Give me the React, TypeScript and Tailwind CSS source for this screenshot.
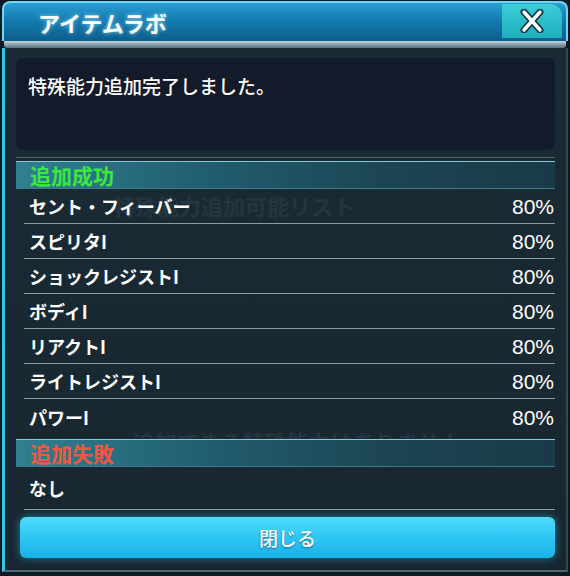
import React from "react";

const rows = [
  "セント・フィーバー",
  "スピリタI",
  "ショックレジストI",
  "ボディI",
  "リアクトI",
  "ライトレジストI",
  "パワーI",
];

export default function App() {
  return (
    <div className="w-[570px] h-[576px] bg-[#0c1a23] relative overflow-hidden flex flex-col font-['Noto_Sans_CJK_JP','Noto_Sans',sans-serif] text-white">
      {/* Title bar */}
      <div className="h-[40px] mx-[2px] mt-[1px] rounded-t-[8px] border-2 border-b-0 border-[#6fd6f4] bg-[linear-gradient(to_bottom,#2a9fd2,#137bb0_45%,#0d5e8c)] flex items-center justify-between relative">
        <div className="pl-[34px] text-[22px] font-bold leading-none [text-shadow:0_0_4px_rgba(160,230,255,0.8)]">
          アイテムラボ
        </div>
        <div className="mr-[4px] mt-[-3px] w-[60px] h-[34px] bg-[linear-gradient(to_bottom,#3ccfd8,#1fadbc)] rounded-tr-[12px] flex items-center justify-center">
          <svg width="28" height="24" viewBox="0 0 28 24">
            <path d="M6 3 L22 21 M22 3 L6 21" stroke="#0e3a45" strokeWidth="7" strokeLinecap="round" />
            <path d="M6 3 L22 21 M22 3 L6 21" stroke="#ffffff" strokeWidth="3.5" strokeLinecap="round" />
          </svg>
        </div>
      </div>
      {/* metallic band */}
      <div className="h-[7px] mx-[4px] bg-[linear-gradient(to_bottom,#c8d6dc,#8aa0aa_50%,#55707c)] rounded-b-[3px]" />

      {/* Body */}
      <div className="flex-1 mx-[2px] mb-[4px] border-l-[3px] border-r-[2px] border-b-[2px] border-l-[#3fc0e8] border-r-[#2f4a55] border-b-[#4a6a78] bg-[linear-gradient(to_bottom,#1a2b36,#18272f)] pl-[11px] pr-[11px] pt-[10px] flex flex-col relative">
        {/* ghost overlay texts */}
        <div className="absolute left-[108px] top-[146px] text-[22px] font-bold text-[#26363f] leading-none pointer-events-none">
          特殊能力追加可能リスト
        </div>
        <div className="absolute left-[128px] top-[382px] text-[22px] font-bold text-[#26363f] leading-none pointer-events-none">
          追加できる特殊能力はありません
        </div>

        {/* message box */}
        <div className="h-[92px] rounded-[7px] bg-[#131a29] px-[12px] pt-[18px] text-[19px] font-medium leading-none relative">
          特殊能力追加完了しました。
        </div>
        <div className="mt-[7px] h-[1px] bg-[#4e6470]" />

        {/* success header */}
        <div className="mt-[3px] h-[28px] border-t border-b border-t-[#86c8d4] border-b-[#3f7a88] bg-[linear-gradient(to_right,#2f8092,#215e6e_35%,#1c4453_70%,#1a3a47)] flex items-center pl-[14px] text-[21px] font-bold text-[#3be83b] leading-none relative">
          追加成功
        </div>

        <div className="flex flex-col relative">
          {rows.map((r, i) => (
            <div
              key={r}
              className={
                i < rows.length - 1
                  ? "h-[35px] border-b border-[#8a9ba4] ml-[8px] pl-[5px] pr-[1px] flex items-center justify-between"
                  : "h-[40px] ml-[8px] pl-[5px] pr-[1px] pb-[4px] flex items-center justify-between"
              }
            >
              <span className="text-[18px] font-bold leading-none">{r}</span>
              <span className="text-[21px] font-['Liberation_Sans',sans-serif] leading-none">80%</span>
            </div>
          ))}
        </div>

        {/* failure header */}
        <div className="h-[28px] border-t border-b border-t-[#86c8d4] border-b-[#3f7a88] bg-[linear-gradient(to_right,#2f8092,#215e6e_35%,#1c4453_70%,#1a3a47)] flex items-center pl-[14px] text-[21px] font-bold text-[#f4573f] leading-none relative">
          追加失敗
        </div>
        <div className="h-[43px] border-b border-[#8a9ba4] ml-[8px] pl-[5px] flex items-center text-[18px] font-bold leading-none">
          なし
        </div>

        {/* button */}
        <div className="mt-[7px] ml-[4px] h-[41px] rounded-[6px] bg-[linear-gradient(to_bottom,#4fdcfc,#2ec6f4_50%,#1cb0e6)] shadow-[0_0_8px_rgba(40,200,255,0.55)] flex items-center justify-center text-[19px] font-medium leading-none [text-shadow:0_1px_2px_rgba(0,60,100,0.6)]">
          閉じる
        </div>
      </div>
    </div>
  );
}
